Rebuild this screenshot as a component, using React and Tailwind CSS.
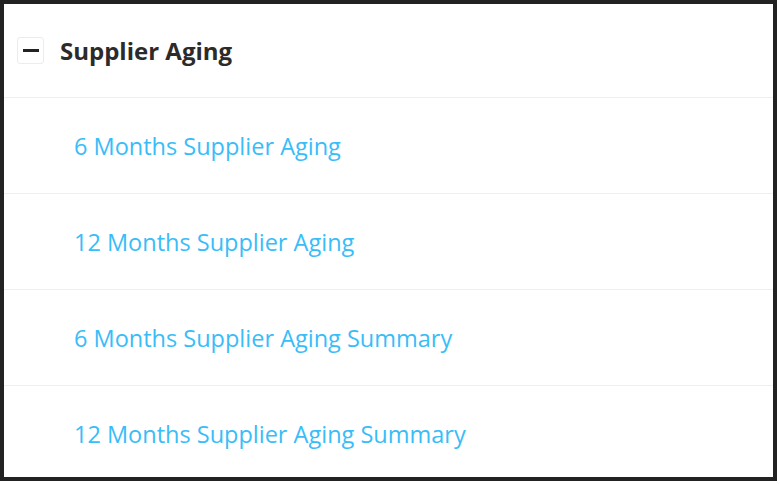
import React from 'react';

const reports = [
  '6 Months Supplier Aging',
  '12 Months Supplier Aging',
  '6 Months Supplier Aging Summary',
  '12 Months Supplier Aging Summary',
];

export default function App() {
  return (
    <div className="h-[484px] w-[780px] bg-white" style={{ fontFamily: '"Open Sans", "Noto Sans", sans-serif' }}>
      <div className="flex h-[481px] w-[777px] flex-col overflow-hidden border-4 border-[#222222] bg-white">
        {/* Group header */}
        <div className="flex h-[94px] shrink-0 items-center gap-[16px] border-b border-[#efefef] pl-[13px]">
          <button
            type="button"
            aria-label="Collapse"
            className="flex h-[27px] w-[27px] items-center justify-center rounded-[3px] border border-[#ececec] bg-white"
          >
            <span className="block h-[3px] w-[16px] bg-[#222222]" />
          </button>
          <span className="pt-[1px] text-[24px] leading-none font-bold text-[#2b2b2b]">Supplier Aging</span>
        </div>

        {reports.map((name) => (
          <div
            key={name}
            className="flex h-[96px] shrink-0 items-center border-b border-[#efefef] pt-[3px] pl-[70px]"
          >
            <a href="#" className="text-[23.5px] text-[#38bdf8]">
              {name}
            </a>
          </div>
        ))}
      </div>
    </div>
  );
}
